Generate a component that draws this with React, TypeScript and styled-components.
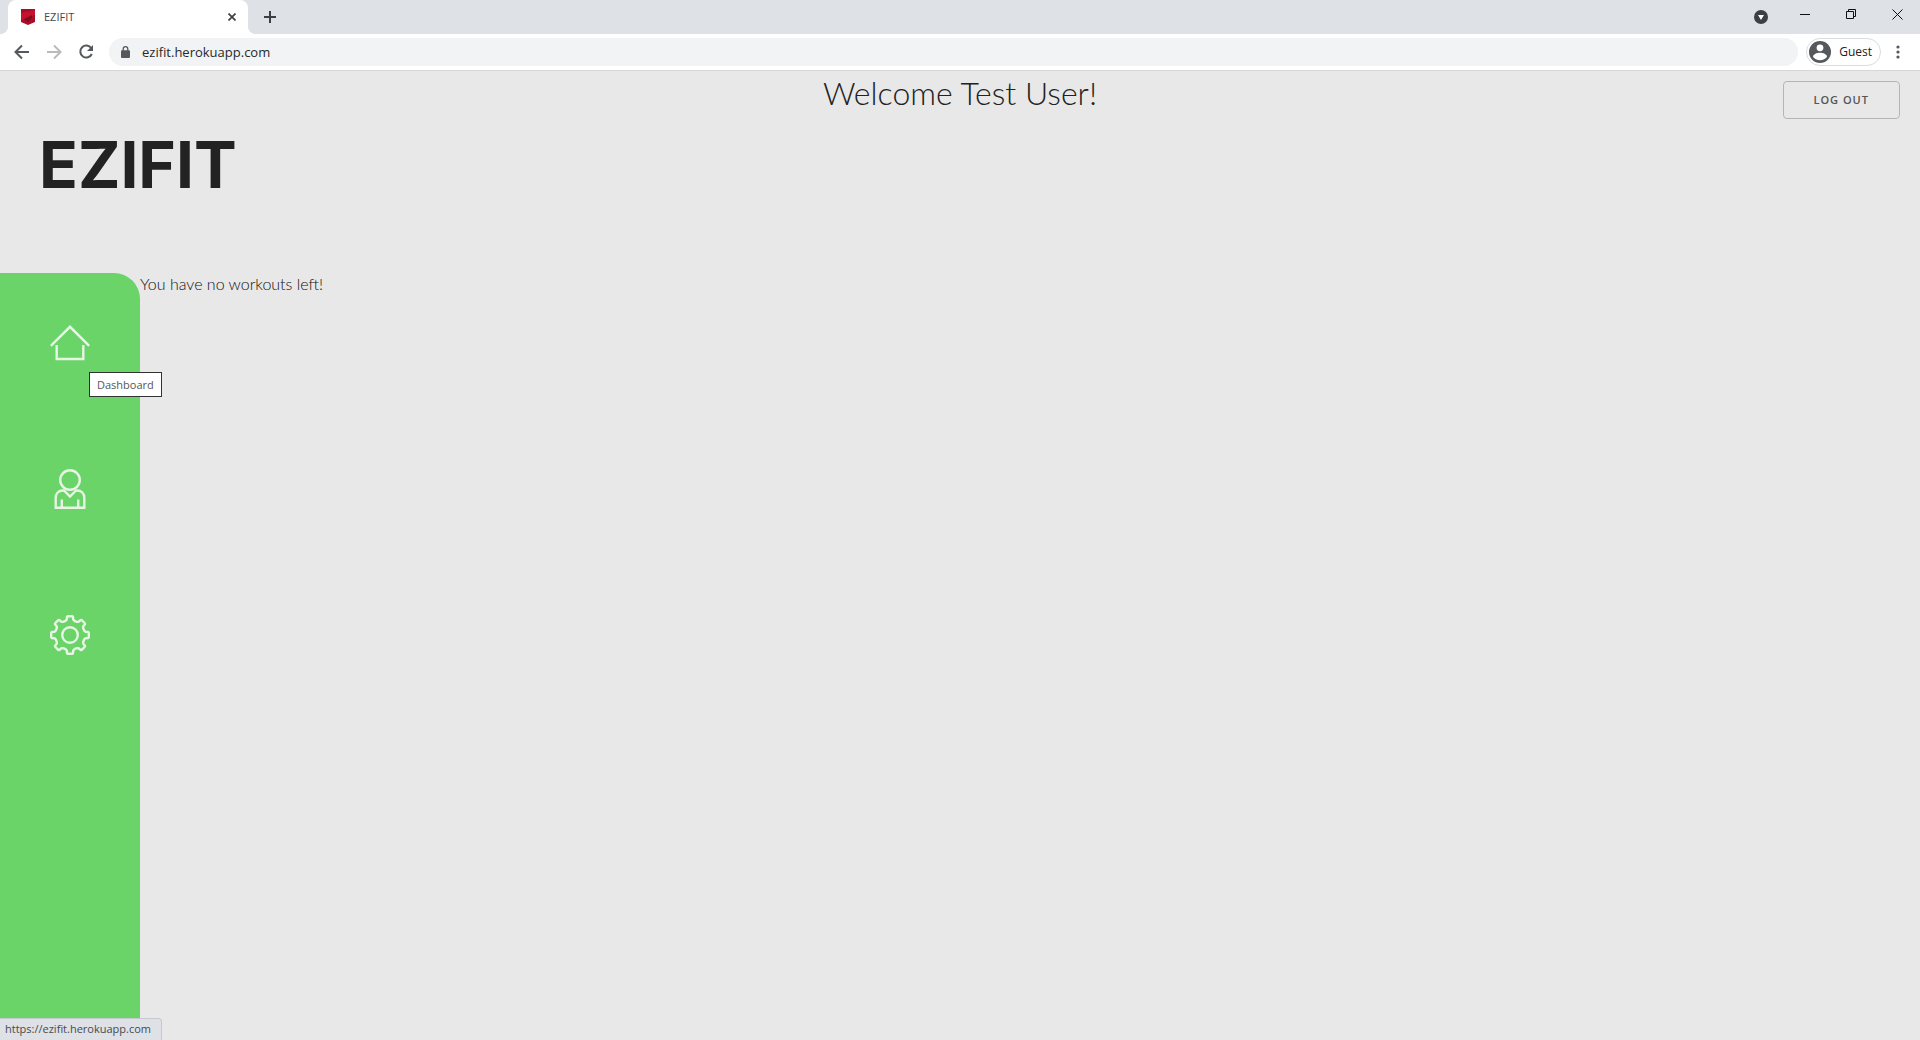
import React from "react";
import styled, { createGlobalStyle } from "styled-components";

const uiFont = `"Open Sans", "Noto Sans", sans-serif`;
const pageFont = `Lato, "Open Sans", sans-serif`;

const GlobalStyle = createGlobalStyle`
  *, *::before, *::after { box-sizing: border-box; }
  body { margin: 0; background: #e8e8e8; }
  button, input { font: inherit; color: inherit; }
  h1, h2, p, ul { margin: 0; padding: 0; }
`;

const Browser = styled.div`
  position: relative;
  display: flex;
  flex-direction: column;
  min-height: 100vh;
  overflow: hidden;
  font-family: ${uiFont};
  color: #222;
`;

const TabStrip = styled.div`
  display: flex;
  align-items: flex-end;
  height: 34px;
  padding-left: 8px;
  background: #dee1e6;
`;

const Tab = styled.div`
  position: relative;
  display: flex;
  align-items: center;
  width: 240px;
  height: 34px;
  padding: 0 9px 0 13px;
  gap: 9px;
  border-radius: 8px 8px 0 0;
  background: #fff;
  color: #45494d;

  &::before,
  &::after {
    content: "";
    position: absolute;
    bottom: 0;
    width: 8px;
    height: 8px;
  }
  &::before {
    left: -8px;
    background: radial-gradient(circle at 0 0, #dee1e6 8px, #fff 8px);
  }
  &::after {
    right: -8px;
    background: radial-gradient(circle at 100% 0, #dee1e6 8px, #fff 8px);
  }
`;

const TabTitle = styled.span`
  flex: 1;
  padding-bottom: 2px;
  font-size: 11px;
`;

const IconButton = styled.button<{ $w?: number; $h?: number }>`
  display: flex;
  flex: none;
  align-items: center;
  justify-content: center;
  width: ${(p) => p.$w ?? 16}px;
  height: ${(p) => p.$h ?? 16}px;
  padding: 0;
  border: 0;
  background: none;

  svg { display: block; }
`;

const NewTab = styled(IconButton)`
  margin-left: 8px;
`;

const WindowControls = styled.div`
  display: flex;
  align-items: center;
  height: 28px;
  margin: 0 0 auto auto;
`;

const Toolbar = styled.div`
  display: flex;
  align-items: center;
  height: 37px;
  padding: 0 6px 1px;
  border-bottom: 1px solid #d5d6d8;
  background: #fff;
`;

const AddressBar = styled.label`
  display: flex;
  flex: 1;
  align-items: center;
  height: 28px;
  margin: 0 8px 0 7px;
  padding-left: 12px;
  gap: 12px;
  border-radius: 14px;
  background: #f1f3f4;
`;

const AddressInput = styled.input`
  flex: 1;
  min-width: 0;
  padding: 0;
  border: 0;
  outline: 0;
  background: none;
  font-size: 13px;
  color: #27292c;
`;

const Profile = styled.button`
  display: flex;
  align-items: center;
  height: 28px;
  margin-right: 1px;
  padding: 0 8px 0 2px;
  gap: 8px;
  border: 1px solid #dadce0;
  border-radius: 14px;
  background: #fff;
  font-size: 12px;
`;

const Page = styled.div`
  display: flex;
  flex: 1;
  flex-direction: column;
  font-family: ${pageFont};
  background: #e8e8e8;
`;

const Header = styled.header`
  display: grid;
  grid-template-columns: 1fr auto 1fr;
  grid-template-rows: auto 1fr;
  height: 202px;
`;

const Welcome = styled.h2`
  grid-column: 2;
  padding-top: 2px;
  font-size: 32px;
  line-height: 40px;
  font-weight: 300;
`;

const LogOut = styled.button`
  justify-self: end;
  height: 38px;
  margin: 10px 20px 0 0;
  padding: 0 30px 2px 29px;
  border: 1px solid #b5b5b5;
  border-radius: 4px;
  background: none;
  font-family: ${uiFont};
  font-size: 11px;
  font-weight: 600;
  letter-spacing: 1px;
  text-transform: uppercase;
  color: #555;
`;

const Logo = styled.h1`
  grid-column: 1;
  padding: 6px 0 0 39px;
  font-family: Inter, sans-serif;
  font-size: 64px;
  line-height: 80px;
  font-weight: 700;
  color: #222;
`;

const Body = styled.div`
  display: flex;
  flex: 1;
`;

const Sidebar = styled.nav`
  width: 140px;
  padding-top: 50px;
  border-top-right-radius: 26px;
  background: #6ad468;
`;

const NavList = styled.ul`
  display: flex;
  flex-direction: column;
  align-items: center;
  gap: 106px;
  list-style: none;
`;

const NavItem = styled.li`
  position: relative;
  height: 40px;
`;

const NavLink = styled.a`
  display: block;

  svg {
    display: block;
    fill: none;
    stroke: #e7f5e4;
    stroke-width: 2.4;
  }
`;

const Tooltip = styled.span`
  position: absolute;
  top: 49px;
  left: 39px;
  z-index: 1;
  height: 25px;
  padding: 0 7px;
  border: 1px solid #333;
  background: #fff;
  font-family: ${uiFont};
  font-size: 11px;
  line-height: 23px;
  color: #575757;
`;

const Message = styled.p`
  font-size: 16px;
  line-height: 22px;
  font-weight: 300;
  color: #111;
`;

const StatusBubble = styled.div`
  position: absolute;
  bottom: 0;
  left: 0;
  height: 22px;
  padding: 0 10px 0 5px;
  border: solid #c5c8cc;
  border-width: 1px 1px 0 0;
  border-top-right-radius: 4px;
  background: #dee1e6;
  font-size: 11px;
  line-height: 20px;
  color: #474a4e;
`;

const gearPath = (() => {
  const tooth = [[-4.4, -14.2], [-3.2, -15.6], [-3, -18.2], [-2.2, -18.8], [2.2, -18.8], [3, -18.2], [3.2, -15.6], [4.4, -14.2]];
  const points: string[] = [];
  for (let i = 0; i < 8; i += 1) {
    const a = (i * Math.PI) / 4;
    tooth.forEach(([x, y]) => {
      const px = 20 + x * Math.cos(a) - y * Math.sin(a);
      const py = 20 + x * Math.sin(a) + y * Math.cos(a);
      points.push(`${px.toFixed(2)} ${py.toFixed(2)}`);
    });
  }
  return `M${points.join("L")}Z`;
})();

const HomeIcon = () => (
  <svg width="40" height="40" viewBox="0 0 40 40">
    <path d="M.8 22.800 20 3.800l19.200 19M6.700 22v14h26.600V22" />
  </svg>
);

const UserIcon = () => (
  <svg width="40" height="40" viewBox="0 0 40 40">
    <circle cx="20" cy="11" r="9.800" />
    <path d="M14 21.500h-1C8.500 21.500 5.700 24.500 5.700 29v9.700h28.600V29c0-4.500-2.800-7.500-7.300-7.500h-1M13.500 21 20 27.500l6.500-6.500M11.800 38.500v-8M28.200 38.500v-8" />
  </svg>
);

const GearIcon = () => (
  <svg width="40" height="40" viewBox="0 0 40 40" strokeLinejoin="round">
    <path d={gearPath} />
    <circle cx="20" cy="20" r="7.800" />
  </svg>
);

export default function App() {
  return (
    <Browser>
      <GlobalStyle />
      <TabStrip>
        <Tab>
          <svg width="14" height="16" viewBox="0 0 14 16">
            <path d="M0 0h14v13l-7 3-7-3z" fill="#a90d28" />
            <path d="M0 4 14 1v5L0 11z" fill="#c4122f" />
            <path d="m3 10 8-4v3l-4 4z" fill="#7f0c20" />
          </svg>
          <TabTitle>EZIFIT</TabTitle>
          <IconButton $w={14} aria-label="Close tab">
            <svg width="8" height="8" viewBox="0 0 8 8" stroke="#3c4043" strokeWidth="1.7">
              <path d="m.5.500 7 7m0-7-7 7" />
            </svg>
          </IconButton>
        </Tab>
        <NewTab $w={28} $h={34} aria-label="New tab">
          <svg width="12" height="12" viewBox="0 0 12 12" stroke="#3c4043" strokeWidth="2">
            <path d="M6 0v12M0 6h12" />
          </svg>
        </NewTab>
        <WindowControls>
          <IconButton $w={42} $h={34} aria-label="Search tabs">
            <svg width="14" height="20" viewBox="0 0 14 20">
              <circle cx="7" cy="13" r="7" fill="#3c4043" />
              <path d="M4 11h6l-3 5z" fill="#fff" />
            </svg>
          </IconButton>
          <IconButton $w={46} $h={28} aria-label="Minimize">
            <svg width="10" height="10" viewBox="0 0 10 10" stroke="#111">
              <path d="M0 5.500h10" />
            </svg>
          </IconButton>
          <IconButton $w={46} $h={28} aria-label="Restore">
            <svg width="10" height="10" viewBox="0 0 10 10" stroke="#111" fill="none">
              <path d="M.5 2.500h7v7h-7zM2.500 2.500v-2h7v7h-2" />
            </svg>
          </IconButton>
          <IconButton $w={46} $h={28} aria-label="Close">
            <svg width="11" height="11" viewBox="0 0 11 11" stroke="#111">
              <path d="m.5.500 10 10m0-10-10 10" />
            </svg>
          </IconButton>
        </WindowControls>
      </TabStrip>
      <Toolbar>
        <IconButton $w={32} $h={28} aria-label="Back">
          <svg width="16" height="16" viewBox="0 0 16 16" fill="none" stroke="#55585c" strokeWidth="2">
            <path d="M15 8H2M8 1.500 1.500 8 8 14.500" />
          </svg>
        </IconButton>
        <IconButton $w={32} $h={28} aria-label="Forward">
          <svg width="16" height="16" viewBox="0 0 16 16" fill="none" stroke="#b8babc" strokeWidth="2">
            <path d="M1 8h13M8 1.500 14.500 8 8 14.500" />
          </svg>
        </IconButton>
        <IconButton $w={32} $h={28} aria-label="Reload">
          <svg width="16" height="16" viewBox="0 0 16 16" fill="none" stroke="#55585c" strokeWidth="2">
            <path d="M13.300 4.200A6 6 0 1 0 13.800 10" />
            <path d="M15 1v6H9z" fill="#55585c" stroke="none" />
          </svg>
        </IconButton>
        <AddressBar>
          <svg width="9" height="12" viewBox="0 0 9 12">
            <path d="M2.200 5V3a2.300 2.300 0 0 1 4.600 0v2" fill="none" stroke="#55585c" strokeWidth="1.300" />
            <rect y="4.300" width="9" height="7.700" rx="1" fill="#55585c" />
          </svg>
          <AddressInput aria-label="Address" defaultValue="ezifit.herokuapp.com" />
        </AddressBar>
        <Profile>
          <svg width="22" height="22" viewBox="0 0 22 22">
            <circle cx="11" cy="11" r="11" fill="#55585c" />
            <circle cx="11" cy="6.800" r="3.400" fill="#fff" />
            <path d="M4 15.800c0-2.500 4-4 7-4s7 1.500 7 4c-1.500 2-4 3.400-7 3.400s-5.500-1.400-7-3.400z" fill="#fff" />
          </svg>
          Guest
        </Profile>
        <IconButton $w={32} $h={28} aria-label="Menu">
          <svg width="4" height="14" viewBox="0 0 4 14" fill="#55585c">
            <circle cx="2" cy="2" r="1.600" />
            <circle cx="2" cy="7" r="1.600" />
            <circle cx="2" cy="12" r="1.600" />
          </svg>
        </IconButton>
      </Toolbar>
      <Page>
        <Header>
          <Welcome>Welcome Test User!</Welcome>
          <LogOut>Log out</LogOut>
          <Logo>EZIFIT</Logo>
        </Header>
        <Body>
          <Sidebar>
            <NavList>
              <NavItem>
                <NavLink href="#dashboard" aria-label="Dashboard"><HomeIcon /></NavLink>
                <Tooltip>Dashboard</Tooltip>
              </NavItem>
              <NavItem>
                <NavLink href="#profile" aria-label="Profile"><UserIcon /></NavLink>
              </NavItem>
              <NavItem>
                <NavLink href="#settings" aria-label="Settings"><GearIcon /></NavLink>
              </NavItem>
            </NavList>
          </Sidebar>
          <Message>You have no workouts left!</Message>
        </Body>
      </Page>
      <StatusBubble>https://ezifit.herokuapp.com</StatusBubble>
    </Browser>
  );
}
